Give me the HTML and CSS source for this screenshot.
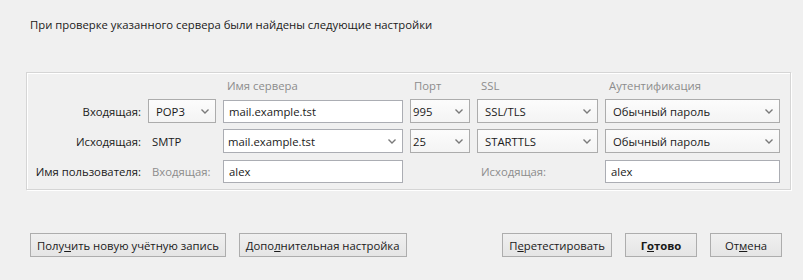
FILE: index.html
```html
<!DOCTYPE html>
<html>
  <head>
    <meta charset="utf-8" />
    <meta name="viewport" content="width=device-width, initial-scale=1" />
    <link rel="stylesheet" href="styles.css">
  </head>

  <body>
    <p class="intro">При проверке указанного сервера были найдены следующие настройки</p>

    <div class="group">
      <span></span>
      <span></span>
      <span class="head">Имя сервера</span>
      <span class="head">Порт</span>
      <span class="head">SSL</span>
      <span class="head">Аутентификация</span>

      <label class="lbl">Входящая:</label>
      <div class="combo pad"><span>POP3</span><svg viewBox="0 0 8 5"><path d="M0.5 0.5 L4 4 L7.5 0.5"/></svg></div>
      <input class="field" type="text" value="mail.example.tst">
      <div class="combo tight"><span>995</span><svg viewBox="0 0 8 5"><path d="M0.5 0.5 L4 4 L7.5 0.5"/></svg></div>
      <div class="combo pad"><span>SSL/TLS</span><svg viewBox="0 0 8 5"><path d="M0.5 0.5 L4 4 L7.5 0.5"/></svg></div>
      <div class="combo pad"><span>Обычный пароль</span><svg viewBox="0 0 8 5"><path d="M0.5 0.5 L4 4 L7.5 0.5"/></svg></div>

      <label class="lbl">Исходящая:</label>
      <span class="plain">SMTP</span>
      <div class="combo edit"><span>mail.example.tst</span><svg viewBox="0 0 8 5"><path d="M0.5 0.5 L4 4 L7.5 0.5"/></svg></div>
      <div class="combo tight"><span>25</span><svg viewBox="0 0 8 5"><path d="M0.5 0.5 L4 4 L7.5 0.5"/></svg></div>
      <div class="combo pad"><span>STARTTLS</span><svg viewBox="0 0 8 5"><path d="M0.5 0.5 L4 4 L7.5 0.5"/></svg></div>
      <div class="combo pad"><span>Обычный пароль</span><svg viewBox="0 0 8 5"><path d="M0.5 0.5 L4 4 L7.5 0.5"/></svg></div>

      <label class="lbl">Имя пользователя:</label>
      <span class="plain dim">Входящая:</span>
      <input class="field" type="text" value="alex">
      <span></span>
      <span class="plain dim">Исходящая:</span>
      <input class="field" type="text" value="alex">
    </div>

    <div class="footer">
      <div class="side">
        <button class="btn">Полу<u>ч</u>ить новую учётную запись</button>
        <button class="btn">Допо<u>л</u>нительная настройка</button>
      </div>
      <div class="side">
        <button class="btn">П<u>е</u>ретестировать</button>
        <button class="btn main">Г<u>о</u>тово</button>
        <button class="btn">От<u>м</u>ена</button>
      </div>
    </div>
  </body>
</html>
```

FILE: styles.css
```css
body {
  margin: 0;
  background: #f0f0f0;
  color: #1a1a1a;
  font-family: "Open Sans", "Noto Sans", sans-serif;
  font-size: 11.3px;
}
.intro {
  margin: 0;
  padding: 17px 0 0 30px;
  line-height: 16px;
}
.group {
  margin: 39px 0 0 26px;
  width: 746px;
  padding: 4px 9px 6px 8px;
  border: 1px solid #d5d5d5;
  box-shadow: inset 1px 1px 0 #fff, 1px 1px 0 #fff;
  display: grid;
  grid-template-columns: 106px 68px 180px 60px 121px 175px;
  grid-template-rows: 16px 24px 24px 24px;
  column-gap: 7px;
  row-gap: 6px;
  align-items: center;
}
.head {
  color: #8c8c8c;
  padding-left: 4px;
}
.lbl {
  text-align: right;
  white-space: nowrap;
}
.plain {
  padding-left: 4px;
}
.dim {
  color: #8c8c8c;
}
.field {
  box-sizing: border-box;
  height: 23px;
  width: 100%;
  margin: 0;
  border: 1px solid #abadb3;
  background: #fff;
  padding: 0 5px;
  font: inherit;
  color: #1a1a1a;
}
.combo {
  box-sizing: border-box;
  height: 24px;
  border: 1px solid #acacac;
  background: linear-gradient(#fcfcfc, #f4f4f4);
  display: flex;
  align-items: center;
  justify-content: space-between;
  padding: 0 6px 0 7px;
}
.combo.tight {
  padding-left: 2px;
}
.combo.edit {
  background: #fff;
  border-color: #abadb3;
  padding-left: 4px;
}
.combo svg {
  width: 8px;
  height: 5px;
  fill: none;
  stroke: #7a7a7a;
  stroke-width: 1.4;
}
.footer {
  display: flex;
  justify-content: space-between;
  padding: 43px 21px 0 30px;
}
.side {
  display: flex;
  gap: 13px;
}
.btn {
  height: 24px;
  padding: 0 6px;
  border: 1px solid #adadad;
  background: linear-gradient(#f0f0f0, #e5e5e5);
  font: inherit;
  color: #1a1a1a;
  min-width: 72px;
}
.btn.main {
  font-weight: bold;
}
```
